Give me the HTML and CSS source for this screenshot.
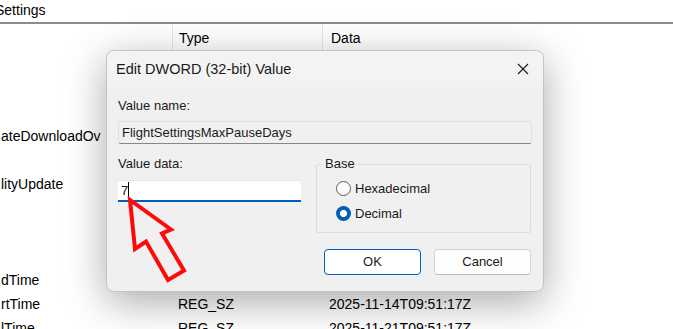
FILE: index.html
```html
<!DOCTYPE html>
<html>
<head>
    <title>Edit DWORD (32-bit) Value</title>
    <link rel="stylesheet" href="styles.css">
</head>
<body>
    <div class="regedit">
        <div class="path">Settings</div>
        <div class="list-head">
            <div class="col-name"></div>
            <div class="col-type">Type</div>
            <div class="col-data">Data</div>
        </div>
        <div class="rows">
            <div class="row"><div class="col-name"></div><div class="col-type"></div><div class="col-data"></div></div>
            <div class="row"><div class="col-name"></div><div class="col-type"></div><div class="col-data"></div></div>
            <div class="row"><div class="col-name"></div><div class="col-type"></div><div class="col-data"></div></div>
            <div class="row"><div class="col-name">ateDownloadOv</div><div class="col-type"></div><div class="col-data"></div></div>
            <div class="row"><div class="col-name"></div><div class="col-type"></div><div class="col-data"></div></div>
            <div class="row"><div class="col-name">lityUpdate</div><div class="col-type"></div><div class="col-data"></div></div>
            <div class="row"><div class="col-name"></div><div class="col-type"></div><div class="col-data"></div></div>
            <div class="row"><div class="col-name"></div><div class="col-type"></div><div class="col-data"></div></div>
            <div class="row"><div class="col-name"></div><div class="col-type"></div><div class="col-data"></div></div>
            <div class="row"><div class="col-name">dTime</div><div class="col-type"></div><div class="col-data"></div></div>
            <div class="row"><div class="col-name">rtTime</div><div class="col-type">REG_SZ</div><div class="col-data">2025-11-14T09:51:17Z</div></div>
            <div class="row"><div class="col-name">lTime</div><div class="col-type">REG_SZ</div><div class="col-data">2025-11-21T09:51:17Z</div></div>
        </div>
    </div>

    <div class="dialog">
        <div class="titlebar">
            <span class="title">Edit DWORD (32-bit) Value</span>
            <svg class="close" width="12" height="12" viewBox="0 0 12 12">
                <path d="M1 1 L11 11 M11 1 L1 11" stroke="#1a1a1a" stroke-width="1.1" fill="none"/>
            </svg>
        </div>
        <div class="dialog-body">
            <div class="label">Value name:</div>
            <div class="field readonly">FlightSettingsMaxPauseDays</div>
            <div class="data-row">
                <div class="data-col">
                    <div class="label">Value data:</div>
                    <div class="field edit">7<span class="caret"></span></div>
                </div>
                <fieldset class="base">
                    <legend>Base</legend>
                    <div class="radio"><span class="dot"></span>Hexadecimal</div>
                    <div class="radio"><span class="dot checked"></span>Decimal</div>
                </fieldset>
            </div>
            <div class="buttons">
                <div class="btn primary">OK</div>
                <div class="btn">Cancel</div>
            </div>
        </div>
    </div>

    <svg class="arrow" width="80" height="100" viewBox="0 0 80 100">
        <polygon points="11,10 16,59 27,51.5 49,90 65,80.5 43,43.5 52,39.5"
                 fill="none" stroke="#ff0a0a" stroke-width="4" stroke-linejoin="miter"/>
    </svg>
</body>
</html>
```

FILE: styles.css
```css
body {
    margin: 0;
    width: 673px;
    height: 329px;
    overflow: hidden;
    background: #fff;
    font-family: "Liberation Sans", Arial, sans-serif;
    color: #000;
    position: relative;
}

.regedit {
    font-size: 14px;
}

.path {
    height: 22px;
    line-height: 21px;
    margin-left: -5px;
    border-bottom: 2px solid #8c8c8c;
}

.list-head {
    display: flex;
    height: 28px;
    line-height: 28px;
}

.list-head .col-name,
.list-head .col-type {
    border-right: 1px solid #e5e5e5;
}

.row {
    display: flex;
    height: 24px;
    line-height: 24px;
}

.col-name {
    width: 171px;
    padding-left: 1px;
    white-space: nowrap;
}

.col-type {
    width: 143px;
    padding-left: 6px;
    white-space: nowrap;
}

.col-data {
    padding-left: 8px;
    white-space: nowrap;
}

/* dialog window */

.dialog {
    position: absolute;
    left: 106px;
    top: 50px;
    width: 436px;
    background: #f0f0f0;
    border: 1px solid #c4c4c4;
    border-radius: 8px;
    box-shadow: 0 10px 40px rgba(0, 0, 0, 0.34);
    font-size: 13px;
    color: #1a1a1a;
}

.titlebar {
    height: 36px;
    display: flex;
    align-items: center;
    justify-content: space-between;
    padding: 0 14px 0 9px;
    background: #f3f3f3;
    border-radius: 8px 8px 0 0;
}

.title {
    font-size: 14.5px;
}

.dialog-body {
    padding: 11px 11px 16px 11px;
}

.label {
    height: 16px;
    line-height: 16px;
}

.field {
    box-sizing: border-box;
    padding-left: 3px;
}

.readonly {
    margin-top: 7px;
    height: 23px;
    line-height: 21px;
    border: 1px solid #e0e0e0;
    border-bottom-color: #878787;
    border-radius: 3px;
    background: #f0f0f0;
}

.data-row {
    display: flex;
    gap: 15px;
    margin-top: 12px;
}

.data-col {
    width: 183px;
}

.edit {
    margin-top: 8px;
    height: 22px;
    line-height: 20px;
    background: #fff;
    border-top: 1px solid #e8e8e8;
    border-bottom: 2px solid #005fb8;
    border-radius: 3px 3px 0 0;
}

.caret {
    display: inline-block;
    width: 1px;
    height: 16px;
    background: #000;
    vertical-align: -3px;
}

.base {
    width: 215px;
    box-sizing: border-box;
    margin: 0;
    padding: 4px 0 6px 19px;
    border: 1px solid #dcdcdc;
    border-radius: 2px;
}

.base legend {
    margin-left: -14px;
    padding: 0 3px;
    line-height: 16px;
}

.radio {
    height: 25px;
    display: flex;
    align-items: center;
    gap: 4px;
}

.dot {
    width: 13px;
    height: 13px;
    border: 1px solid #5c5c5c;
    border-radius: 50%;
    background: #fbfbfb;
}

.dot.checked {
    width: 15px;
    height: 15px;
    border: none;
    background: radial-gradient(circle, #fff 0 3.2px, #005fb8 3.8px);
}

.buttons {
    display: flex;
    justify-content: flex-end;
    gap: 13px;
    margin-top: 16px;
    padding-right: 1px;
}

.btn {
    box-sizing: border-box;
    width: 97px;
    height: 26px;
    line-height: 24px;
    text-align: center;
    background: #fdfdfd;
    border: 1px solid #d4d4d4;
    border-bottom-color: #bdbdbd;
    border-radius: 4px;
}

.btn.primary {
    background: #fff;
    border-color: #005fb8;
}

.arrow {
    position: absolute;
    left: 119px;
    top: 190px;
}
```
